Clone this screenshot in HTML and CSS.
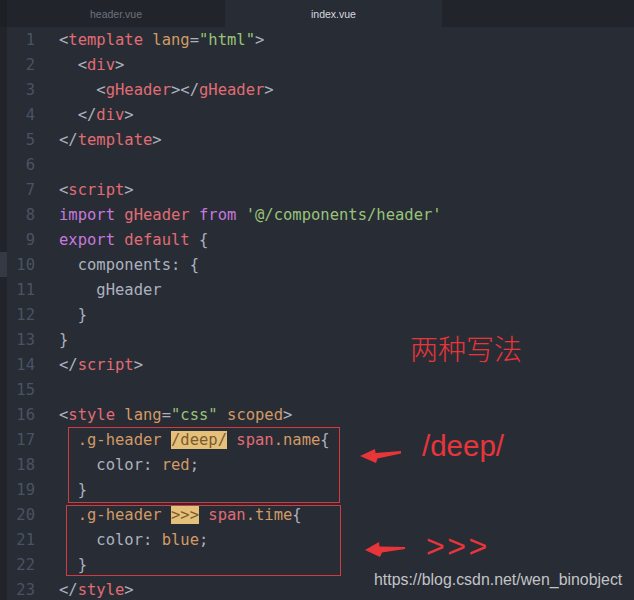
FILE: index.html
```html
<!DOCTYPE html>
<html lang="zh-CN">
<head>
    <meta charset="UTF-8">
    <meta name="viewport" content="width=device-width, initial-scale=1.0">
    <title>index.vue</title>
    <link rel="stylesheet" href="styles.css">
</head>
<body>
    <div class="window">
        <div class="tabs">
            <div class="strip"></div>
            <div class="tab">header.vue</div>
            <div class="tab active">index.vue</div>
            <div class="tab-rest"></div>
        </div>
        <div class="editor">
            <div class="line"><span class="mark"></span><span class="ln">1</span><span class="code"><span class="p">&lt;</span><span class="t">template</span> <span class="a">lang</span><span class="p">=</span><span class="s">"html"</span><span class="p">&gt;</span></span></div>
            <div class="line"><span class="mark"></span><span class="ln">2</span><span class="code">  <span class="p">&lt;</span><span class="t">div</span><span class="p">&gt;</span></span></div>
            <div class="line"><span class="mark"></span><span class="ln">3</span><span class="code">    <span class="p">&lt;</span><span class="t">gHeader</span><span class="p">&gt;&lt;/</span><span class="t">gHeader</span><span class="p">&gt;</span></span></div>
            <div class="line"><span class="mark"></span><span class="ln">4</span><span class="code">  <span class="p">&lt;/</span><span class="t">div</span><span class="p">&gt;</span></span></div>
            <div class="line"><span class="mark"></span><span class="ln">5</span><span class="code"><span class="p">&lt;/</span><span class="t">template</span><span class="p">&gt;</span></span></div>
            <div class="line"><span class="mark"></span><span class="ln">6</span><span class="code"></span></div>
            <div class="line"><span class="mark"></span><span class="ln">7</span><span class="code"><span class="p">&lt;</span><span class="t">script</span><span class="p">&gt;</span></span></div>
            <div class="line"><span class="mark"></span><span class="ln">8</span><span class="code"><span class="k">import</span> <span class="t">gHeader</span> <span class="k">from</span> <span class="s">'@/components/header'</span></span></div>
            <div class="line"><span class="mark"></span><span class="ln">9</span><span class="code"><span class="k">export</span> <span class="t">default</span> <span class="p">{</span></span></div>
            <div class="line cursor"><span class="mark"></span><span class="ln">10</span><span class="code">  components<span class="p">:</span> <span class="p">{</span></span></div>
            <div class="line"><span class="mark"></span><span class="ln">11</span><span class="code">    gHeader</span></div>
            <div class="line"><span class="mark"></span><span class="ln">12</span><span class="code">  <span class="p">}</span></span></div>
            <div class="line"><span class="mark"></span><span class="ln">13</span><span class="code"><span class="p">}</span></span></div>
            <div class="line"><span class="mark"></span><span class="ln">14</span><span class="code"><span class="p">&lt;/</span><span class="t">script</span><span class="p">&gt;</span></span></div>
            <div class="line"><span class="mark"></span><span class="ln">15</span><span class="code"></span></div>
            <div class="line"><span class="mark"></span><span class="ln">16</span><span class="code"><span class="p">&lt;</span><span class="t">style</span> <span class="a">lang</span><span class="p">=</span><span class="s">"css"</span> <span class="a">scoped</span><span class="p">&gt;</span></span></div>
            <div class="line"><span class="mark"></span><span class="ln">17</span><span class="code">  <span class="a">.g-header</span> <span class="hl">/deep/</span> <span class="t">span</span><span class="a">.name</span><span class="p">{</span></span></div>
            <div class="line"><span class="mark"></span><span class="ln">18</span><span class="code">    color<span class="p">:</span> <span class="a">red</span><span class="p">;</span></span></div>
            <div class="line"><span class="mark"></span><span class="ln">19</span><span class="code">  <span class="p">}</span></span></div>
            <div class="line"><span class="mark"></span><span class="ln">20</span><span class="code">  <span class="a">.g-header</span> <span class="hl">&gt;&gt;&gt;</span> <span class="t">span</span><span class="a">.time</span><span class="p">{</span></span></div>
            <div class="line"><span class="mark"></span><span class="ln">21</span><span class="code">    color<span class="p">:</span> <span class="a">blue</span><span class="p">;</span></span></div>
            <div class="line"><span class="mark"></span><span class="ln">22</span><span class="code">  <span class="p">}</span></span></div>
            <div class="line"><span class="mark"></span><span class="ln">23</span><span class="code"><span class="p">&lt;/</span><span class="t">style</span><span class="p">&gt;</span></span></div>
        </div>

        <!-- annotations drawn over the screenshot -->
        <div class="box box-deep"></div>
        <div class="box box-arrows"></div>
        <div class="note note-title">两种写法</div>
        <svg class="arrow arrow-deep" width="46" height="20" viewBox="0 0 46 20">
            <polygon points="2,10 17,3 17.5,7 43,5 43,7.5 19.5,12.5 18,17" fill="#e8353a"/>
        </svg>
        <div class="note note-deep">/deep/</div>
        <svg class="arrow arrow-gt" width="46" height="20" viewBox="0 0 46 20">
            <polygon points="2,10 16,2 16.5,6.5 42,7 42,9 19,12.5 17,17" fill="#e8353a"/>
        </svg>
        <div class="note note-gt">&gt;&gt;&gt;</div>
        <div class="watermark">https://blog.csdn.net/wen_binobject</div>
    </div>
</body>
</html>
```

FILE: styles.css
```css
body { margin: 0; background: #282c34; }
.window { position: relative; width: 634px; height: 600px; overflow: hidden; background: #282c34; }

.tabs { display: flex; height: 27px; background: #21252b; font-family: "Liberation Sans", Arial, sans-serif; font-size: 10.5px; }
.strip { width: 7px; background: #1d2025; }
.tab { width: 218px; display: flex; align-items: center; justify-content: center; color: #6d727c; background: #21252b; }
.tab.active { width: 217px; color: #d7dae0; background: #282c34; }
.tab-rest { flex: 1; background: #21252b; }

.editor { font-family: "DejaVu Sans Mono", "Liberation Mono", monospace; font-size: 15.5px; color: #abb2bf; }
.line { display: flex; height: 25px; align-items: center; }
.mark { width: 7px; height: 25px; background: #21252b; flex: none; }
.cursor .mark { background: #343943; }
.ln { width: 28px; text-align: right; color: #4b5263; flex: none; }
.code { padding-left: 24px; white-space: pre; }

.p { color: #abb2bf; }
.t { color: #e06c75; }
.a { color: #d19a66; }
.s { color: #98c379; }
.k { color: #c678dd; }
.hl { background: #e5c07b; color: #7d5b2e; }

.box { position: absolute; border: 1px solid #d23a40; box-sizing: border-box; }
.box-deep { left: 68px; top: 427px; width: 272px; height: 76px; }
.box-arrows { left: 66px; top: 505px; width: 275px; height: 71px; }

.note { position: absolute; color: #e8353a; line-height: 1; white-space: nowrap; }
.note-title { left: 410px; top: 334px; font-family: "Noto Sans CJK SC", sans-serif; font-size: 28px; font-weight: 300; }
.note-deep { left: 422px; top: 431px; font-family: "Liberation Sans", Arial, sans-serif; font-size: 29.5px; }
.note-gt { left: 426px; top: 530px; font-family: "Liberation Sans", Arial, sans-serif; font-size: 32px; letter-spacing: 2.5px; }

.arrow { position: absolute; }
.arrow-deep { left: 358px; top: 446px; }
.arrow-gt { left: 363px; top: 540px; }

.watermark { position: absolute; left: 374px; top: 572px; font-family: "Liberation Sans", Arial, sans-serif; font-size: 15.9px; line-height: 1; color: #c2c4c8; white-space: nowrap; }
```
